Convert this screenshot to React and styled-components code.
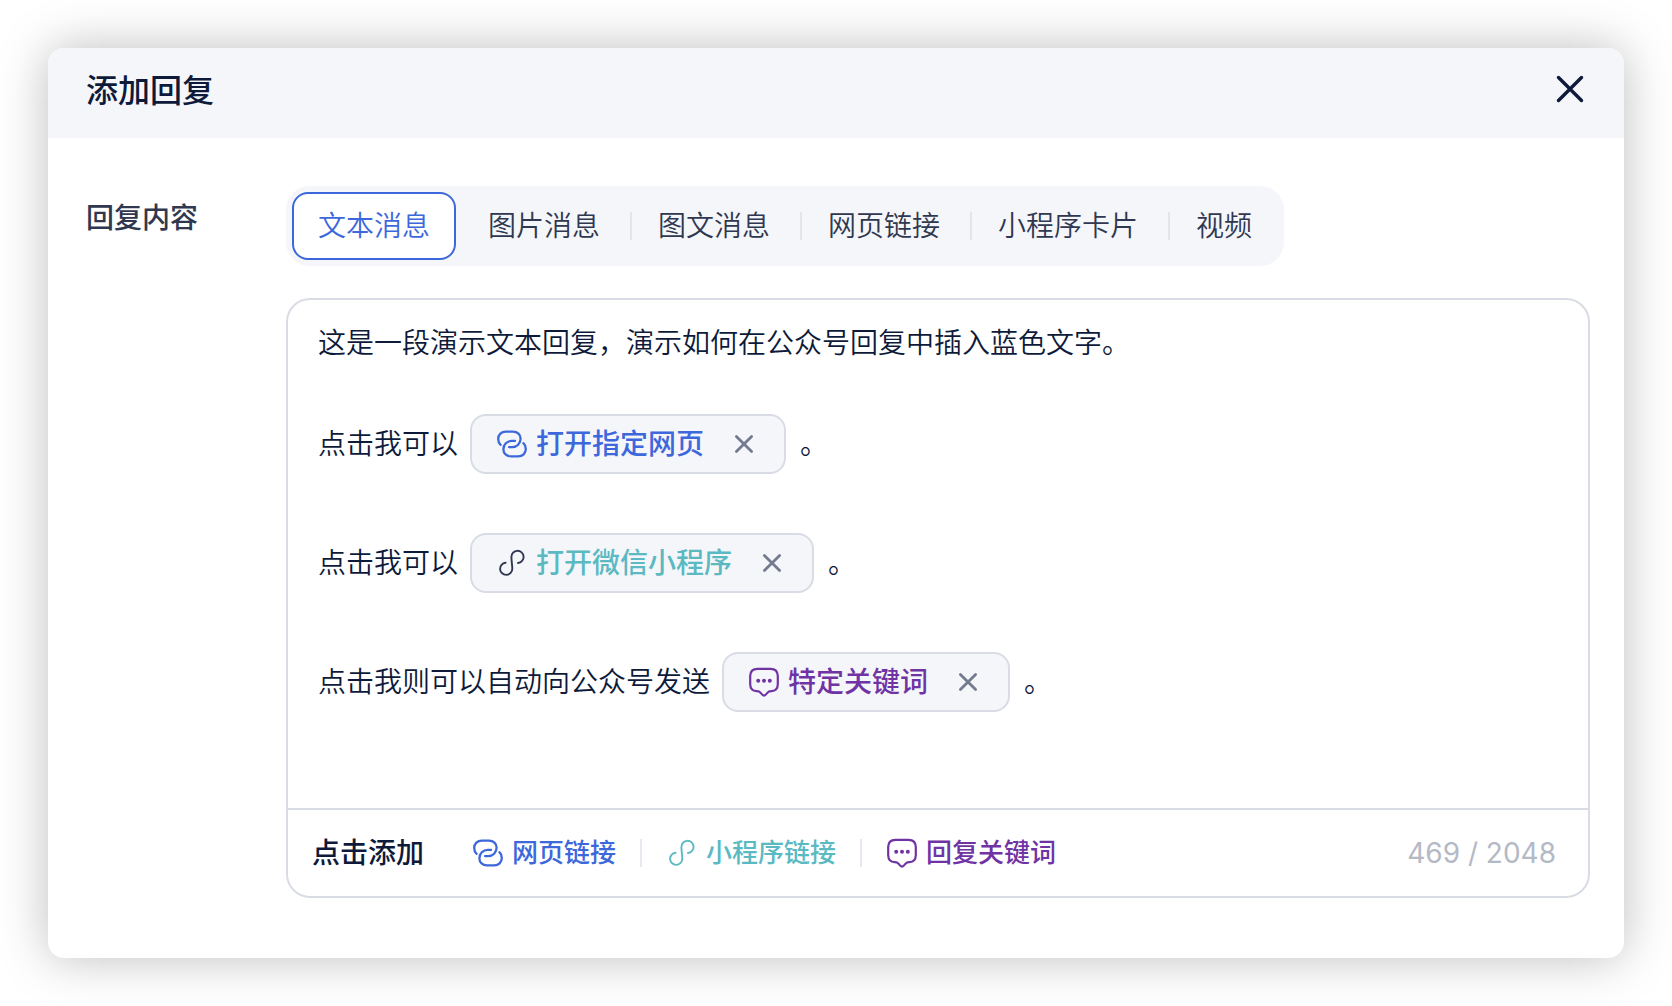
import React, { useState } from "react";
import styled, { createGlobalStyle } from "styled-components";

const GlobalStyle = createGlobalStyle`
  * {
    box-sizing: border-box;
  }

  body {
    margin: 0;
    background: #fff;
    color: #0d1a3a;
    font-family: Inter, "Noto Sans CJK SC", sans-serif;
    font-size: 28px;
    font-weight: 350;
    line-height: 40px;
  }

  button {
    margin: 0;
    padding: 0;
    border: none;
    background: none;
    color: inherit;
    font: inherit;
    cursor: pointer;
  }
`;

const Page = styled.main`
  padding: 48px;
`;

const Dialog = styled.section`
  border-radius: 16px;
  background: #fff;
  box-shadow: 0 0 50px rgba(0, 0, 0, 0.26);
`;

const Header = styled.header`
  display: flex;
  align-items: flex-start;
  justify-content: space-between;
  padding: 25px 38px 29px;
  border-radius: 16px 16px 0 0;
  background: #f5f6fa;
`;

const Title = styled.h1`
  margin: 0;
  font-size: 32px;
  line-height: 36px;
  font-weight: 500;
`;

const IconButton = styled.button`
  display: flex;
  color: ${(p) => p.$color};
`;

const Svg = styled.svg`
  flex: none;
  display: block;
  width: 32px;
  height: 32px;
  color: ${(p) => p.$color || "inherit"};
  fill: none;
  stroke: currentColor;
  stroke-linecap: round;
  stroke-linejoin: round;
`;

const Body = styled.div`
  display: flex;
  align-items: flex-start;
  padding: 48px 34px 60px 38px;
`;

const Label = styled.div`
  flex: none;
  width: 200px;
  padding-top: 12px;
  color: #2f3850;
  font-weight: 500;
`;

const Content = styled.div`
  flex: 1;
  display: flex;
  flex-direction: column;
  align-items: flex-start;
  gap: 32px;
`;

const Tabs = styled.div`
  display: flex;
  align-items: center;
  padding: 6px;
  border-radius: 24px;
  background: #f5f6fa;
`;

const Tab = styled.button`
  padding: 12px 24px;
  border: 2px solid ${(p) => (p.$active ? "#3d68db" : "transparent")};
  border-radius: 16px;
  background: ${(p) => (p.$active ? "#fff" : "transparent")};
  color: ${(p) => (p.$active ? "#3d68db" : "#2f3850")};
`;

const TabDivider = styled.span`
  width: 2px;
  height: 28px;
  margin-left: 4px;
  background: ${(p) => (p.$hidden ? "transparent" : "#e3e5ea")};
`;

const Editor = styled.div`
  width: 100%;
  border: 2px solid #d9dce4;
  border-radius: 24px;
`;

const EditArea = styled.div`
  padding: 23px 30px 96px;
  outline: none;
`;

const Intro = styled.p`
  margin: 0 0 51px;
`;

const Line = styled.div`
  display: flex;
  align-items: center;

  & + & {
    margin-top: 59px;
  }
`;

const Chip = styled.span`
  display: flex;
  align-items: center;
  margin: 0 14px 0 12px;
  padding: 8px 24px;
  border: 2px solid #d9dce4;
  border-radius: 16px;
  background: #f5f6fa;
`;

const ChipText = styled.span`
  margin: 0 24px 0 8px;
  color: ${(p) => p.$color};
  font-weight: 500;
`;

const Footer = styled.div`
  display: flex;
  align-items: center;
  padding: 23px 32px 23px 24px;
  border-top: 2px solid #d9dce4;
`;

const FooterTitle = styled.span`
  margin-right: 48px;
  font-weight: 500;
`;

const AddButton = styled.button`
  display: flex;
  align-items: center;
  gap: 8px;
  color: ${(p) => p.$color};
  font-size: 26px;
  font-weight: 500;
`;

const FooterDivider = styled.span`
  width: 2px;
  height: 28px;
  margin: 0 24px;
  background: #e8e9f0;
`;

const Counter = styled.span`
  margin-left: auto;
  color: #b4b9c6;
  font-weight: 400;
`;

const CloseIcon = () => (
  <Svg viewBox="0 0 32 32" strokeWidth="3.4">
    <path d="M4.5 4.5l23 23M27.5 4.5l-23 23" />
  </Svg>
);

const RemoveIcon = () => (
  <Svg viewBox="0 0 32 32" strokeWidth="2.8">
    <path d="M8.4 8.4l15.2 15.2M23.6 8.4L8.4 23.6" />
  </Svg>
);

const WebIcon = ({ color }) => (
  <Svg viewBox="0 0 32 32" strokeWidth="2.3" $color={color}>
    <path d="M4.6 16.8C3 15.400 2.200 13.400 2.200 11 2.200 6.700 5.400 3.600 9.800 3.600H17c4.400 0 7.600 3 7.600 7 0 5-3.600 8.500-8.400 8.500H13" />
    <path d="M27.400 15.200c1.600 1.400 2.400 3.400 2.400 5.800 0 4.300-3.200 7.400-7.600 7.400H15c-4.400 0-7.600-3-7.600-7 0-5 3.600-8.500 8.400-8.500H19" />
  </Svg>
);

const MiniIcon = ({ color }) => (
  <Svg viewBox="0 0 32 32" strokeWidth="1.9" $color={color}>
    <path d="M9.6 15.700A6.100 6.100 0 1 0 16.300 21.700C16.300 18 15.400 14 15.400 10A6.100 6.100 0 1 1 22 16" />
  </Svg>
);

const KeywordIcon = ({ color }) => (
  <Svg viewBox="0 0 32 32" strokeWidth="2.2" $color={color}>
    <path d="M9.400 2.800H22.600C27.200 2.900 29.700 5.400 29.800 9.800V18.200C29.700 22.600 27.600 24.900 23.400 25.200C21.600 25.300 20.400 25.600 19.600 26.600C18.300 28.300 17.400 29.600 16 29.600S13.700 28.300 12.400 26.600C11.600 25.600 10.400 25.300 8.600 25.200C4.400 24.900 2.300 22.600 2.200 18.200V9.800C2.300 5.400 4.800 2.900 9.400 2.800Z" />
    <g fill="currentColor" stroke="none">
      <circle cx="10.200" cy="14.700" r="2" />
      <circle cx="16" cy="14.700" r="2" />
      <circle cx="21.800" cy="14.700" r="2" />
    </g>
  </Svg>
);

const tabs = ["文本消息", "图片消息", "图文消息", "网页链接", "小程序卡片", "视频"];

const lines = [
  { before: "点击我可以", text: "打开指定网页", color: "#3d68db", icon: <WebIcon color="#3d68db" /> },
  { before: "点击我可以", text: "打开微信小程序", color: "#5bb9c2", icon: <MiniIcon color="#2f3850" /> },
  { before: "点击我则可以自动向公众号发送", text: "特定关键词", color: "#7033a4", icon: <KeywordIcon color="#7033a4" /> },
];

const App = () => {
  const [active, setActive] = useState(0);

  return (
    <>
      <GlobalStyle />
      <Page>
        <Dialog role="dialog" aria-labelledby="dialog-title">
          <Header>
            <Title id="dialog-title">添加回复</Title>
            <IconButton type="button" aria-label="关闭" $color="#0d1a3a">
              <CloseIcon />
            </IconButton>
          </Header>
          <Body>
            <Label id="reply-label">回复内容</Label>
            <Content>
              <Tabs role="tablist" aria-labelledby="reply-label">
                {tabs.map((name, i) => (
                  <React.Fragment key={name}>
                    {i > 0 && <TabDivider $hidden={i === active || i - 1 === active} />}
                    <Tab
                      type="button"
                      role="tab"
                      aria-selected={i === active}
                      $active={i === active}
                      onClick={() => setActive(i)}
                    >
                      {name}
                    </Tab>
                  </React.Fragment>
                ))}
              </Tabs>
              <Editor>
                <EditArea
                  role="textbox"
                  aria-multiline="true"
                  aria-labelledby="reply-label"
                  contentEditable
                  suppressContentEditableWarning
                  spellCheck={false}
                >
                  <Intro>这是一段演示文本回复，演示如何在公众号回复中插入蓝色文字。</Intro>
                  {lines.map((line) => (
                    <Line key={line.text}>
                      <span>{line.before}</span>
                      <Chip contentEditable={false}>
                        {line.icon}
                        <ChipText $color={line.color}>{line.text}</ChipText>
                        <IconButton type="button" aria-label={`移除${line.text}`} $color="#757b8f">
                          <RemoveIcon />
                        </IconButton>
                      </Chip>
                      <span>。</span>
                    </Line>
                  ))}
                </EditArea>
                <Footer>
                  <FooterTitle>点击添加</FooterTitle>
                  <AddButton type="button" $color="#3d68db">
                    <WebIcon />
                    网页链接
                  </AddButton>
                  <FooterDivider />
                  <AddButton type="button" $color="#5bb9c2">
                    <MiniIcon />
                    小程序链接
                  </AddButton>
                  <FooterDivider />
                  <AddButton type="button" $color="#7033a4">
                    <KeywordIcon />
                    回复关键词
                  </AddButton>
                  <Counter>469 / 2048</Counter>
                </Footer>
              </Editor>
            </Content>
          </Body>
        </Dialog>
      </Page>
    </>
  );
};

export default App;
